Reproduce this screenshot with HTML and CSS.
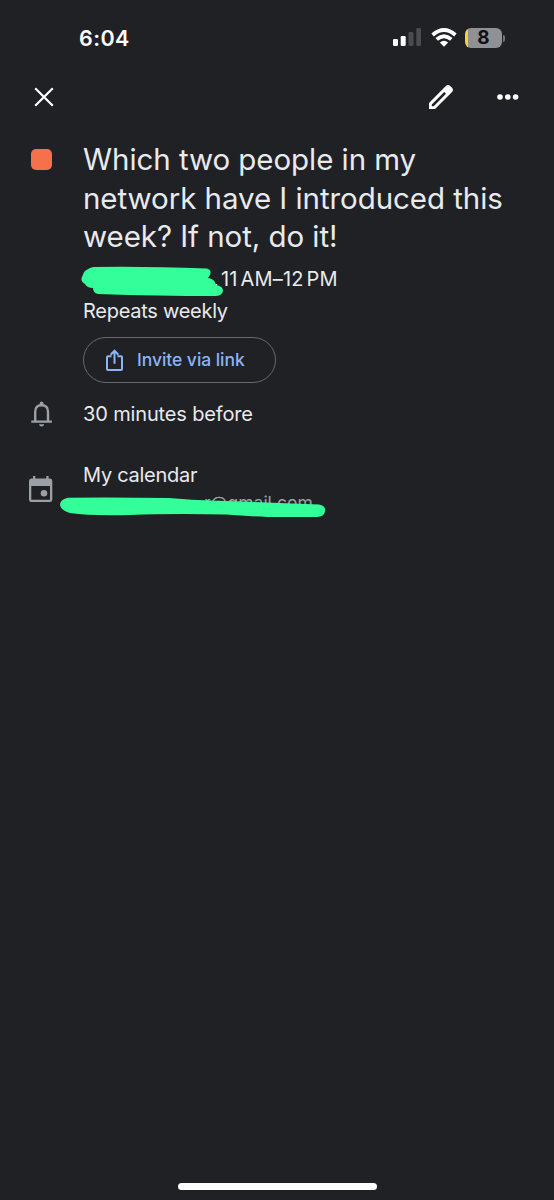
FILE: index.html
```html
<!DOCTYPE html>
<html lang="en">
<head>
<meta charset="utf-8">
<title>Calendar event</title>
<link rel="stylesheet" href="styles.css">
</head>
<body>
<main class="screen">
  <header class="status">
    <span class="clock">6:04</span>
    <div class="indicators">
      <svg class="signal" width="28" height="18" viewBox="0 0 28 18"><g fill="#fff"><rect y="11" width="5" height="7" rx="1.3"/><rect x="7.7" y="8" width="5" height="10" rx="1.3"/></g><g fill="#4b4c4f"><rect x="15.5" y="4" width="5" height="14" rx="1.3"/><rect x="23.3" width="4.7" height="18" rx="1.3"/></g></svg>
      <svg class="wifi" width="26" height="19" viewBox="0 0 26 19"><g fill="none" stroke="#fff" stroke-width="3.7"><path d="M1.6 7Q13-3 24.4 7"/><path d="M5.7 11.4Q13 5 20.3 11.4"/></g><path fill="#fff" d="M8.8 14.5Q13 11 17.2 14.5L13 18.7Z"/></svg>
      <div class="battery"><span>8</span></div><i class="battery-tip"></i>
    </div>
  </header>
  <nav class="toolbar">
    <svg class="close" width="20" height="20" viewBox="0 0 20 20"><path d="M1.2 1.2 18.8 18.8M18.8 1.2 1.2 18.8" fill="none" stroke="#fff" stroke-width="2.2"/></svg>
    <svg class="edit" width="24" height="24" viewBox="0 0 24 24"><path fill="#fff" fill-rule="evenodd" d="M0 18 16.6 1.2Q19-.9 21.2 1L23 2.8Q25 5 22.8 7.3L6 24H0ZM2.8 19.4V21.2H4.7L17 8.8 15.2 7Z"/></svg>
    <svg class="more" width="22" height="6" viewBox="0 0 22 6"><g fill="#fff"><circle cx="3" cy="3" r="2.8"/><circle cx="10.8" cy="3" r="2.8"/><circle cx="18.6" cy="3" r="2.8"/></g></svg>
  </nav>
  <section class="row event">
    <div class="lead"><span class="swatch"></span></div>
    <div class="content">
      <h1><span class="l1">Which two people in my</span><span class="l2">network have I introduced this</span><span class="l3">week? If not, do it!</span></h1>
      <p class="when"><span class="comma">,</span><span class="time">11<i></i>AM–12<i></i>PM</span>
        <svg class="mark" width="142" height="32" viewBox="0 0 142 32"><path fill="#34fe99" d="M12 1Q60 0 126 2.5Q131 4 129 9L127 12Q134 13 135 19Q142 20 142 25Q141 30 134 30Q78 30 17 28Q12 27 12 22Q6 22 4 18Q-1 15 1 11Q3 3 12 1Z"/></svg>
      </p>
      <p class="repeat">Repeats weekly</p>
      <div class="invite">
        <svg width="18" height="22" viewBox="0 0 18 22"><path d="M5.5 7.3H2Q1 7.3 1 8.3V20Q1 21 2 21H15Q16 21 16 20V8.3Q16 7.3 15 7.3H11.5M8.5 14.8V2M4.6 5.8 8.5 1.8 12.4 5.8" fill="none" stroke="#8ab4f8" stroke-width="2"/></svg>
        <span>Invite via link</span>
      </div>
    </div>
  </section>
  <section class="row reminder">
    <div class="lead"><svg width="22" height="26" viewBox="0 0 22 26"><path d="M4.2 20V11Q4.2 4.3 10.6 4.3T17 11V20" fill="none" stroke="#9aa0a6" stroke-width="2.4"/><path fill="#9aa0a6" d="M.3 19.5H20.9V21.7H.3ZM8.6 4V2.5Q8.8.5 10.6.5T12.6 2.5V4ZM8 23.2H13.2Q12.8 25.6 10.6 25.6T8 23.2Z"/></svg></div>
    <p class="content remind-text">30 minutes before</p>
  </section>
  <section class="row calendar">
    <div class="lead"><svg width="24" height="26" viewBox="0 0 24 26"><path fill="#9aa0a6" fill-rule="evenodd" d="M4 0H6.3V2.5H17.3V0H19.6V2.5H21Q23.3 2.5 23.3 5V23.5Q23.3 26 21 26H2.3Q0 26 0 23.5V5Q0 2.5 2.3 2.5H4ZM2.3 10V23.7H21V10Z"/><circle cx="15" cy="17.3" r="3.3" fill="#9aa0a6"/></svg></div>
    <div class="content"><p class="cal-name">My calendar</p><p class="account">r@gmail.com</p>
      <svg class="mark account-mark" width="266" height="22" viewBox="0 0 266 22"><path fill="#34fe99" d="M8 .7Q60 .3 109 1Q132 3 155 3.8Q205 5 259 7.5Q266 8.8 265 14.3Q264 20 257 20H208Q185 19 166 17.5Q110 16.5 70 18Q30 19 10 16Q0 13 0 7Q1 2 8 .7Z"/></svg>
    </div>
  </section>
  <div class="home"></div>
</main>
</body>
</html>
```
FILE: styles.css
```css
* { box-sizing: border-box; margin: 0; padding: 0; }
body { background: #202125; color: #e8eaed; font-family: Inter, "Liberation Sans", sans-serif; }
svg { display: block; flex: none; }
.screen { width: 554px; height: 1200px; display: flex; flex-direction: column; background: #202125; }
.status { height: 74px; display: flex; justify-content: space-between; padding: 0 49px 0 79px; color: #fff; }
.clock { font-size: 21.5px; font-weight: 600; line-height: 76px; letter-spacing: .4px; }
.indicators { display: flex; align-items: flex-start; padding-top: 28px; }
.wifi { margin-left: 10px; }
.battery { width: 37px; height: 20px; margin-left: 8px; border-radius: 6px; background: linear-gradient(90deg, #fbd22d 0 3px, #909194 3px); color: #111; text-align: center; font-size: 19px; font-weight: 700; line-height: 20px; }
.battery-tip { width: 2px; height: 7px; margin: 7px 0 0 1px; border-radius: 0 2px 2px 0; background: #737477; }
.toolbar { height: 66px; display: flex; align-items: flex-start; padding: 0 35px 0 34px; }
.close { margin-top: 13px; }
.edit { margin: 11px 44px 0 auto; }
.more { margin-top: 20px; }
.row { display: flex; }
.lead { width: 83px; flex: none; padding-left: 31px; }
.content { position: relative; flex: 1; min-width: 0; }
.swatch { display: block; width: 21px; height: 21px; margin-top: 9px; border-radius: 5px; background: #f5714a; }
h1 { font-size: 29.5px; font-weight: 400; line-height: 38.5px; }
h1 span { display: block; white-space: nowrap; width: max-content; letter-spacing: -.06px; }
.when { position: relative; height: 32px; display: flex; align-items: center; padding-top: 16px; font-size: 20px; line-height: 32px; font-weight: 400; margin-top: -1px; }
.comma { margin-left: 130px; width: 8px; }
.time { white-space: nowrap; letter-spacing: .15px; }
.time i { display: inline-block; width: 3px; }
.mark { position: absolute; left: -2px; top: 11px; }
.repeat { font-size: 20px; line-height: 30px; font-weight: 400; margin-top: 9px; letter-spacing: -.27px; }
.invite { width: 193px; height: 46px; margin-top: 11px; padding-left: 22px; border: 1px solid #66696d; border-radius: 23px; display: flex; align-items: center; gap: 13px; color: #8ab4f8; font-size: 17.5px; font-weight: 500; letter-spacing: -.05px; white-space: nowrap; }
.reminder { margin-top: 18px; }
.remind-text { font-size: 20px; line-height: 26px; font-weight: 400; letter-spacing: -.15px; }
.calendar { margin-top: 34px; }
.calendar .lead { padding: 15px 0 0 29px; }
.cal-name { font-size: 20px; line-height: 28px; font-weight: 400; letter-spacing: -.27px; }
.account { margin: 1px 0 0 121px; color: #9aa0a6; font-size: 17.5px; line-height: 26px; font-weight: 400; }
.account-mark { left: -23px; top: 36px; }
.home { width: 199px; height: 7px; margin: auto auto 10px 178px; border-radius: 4px; background: #fff; }
```
